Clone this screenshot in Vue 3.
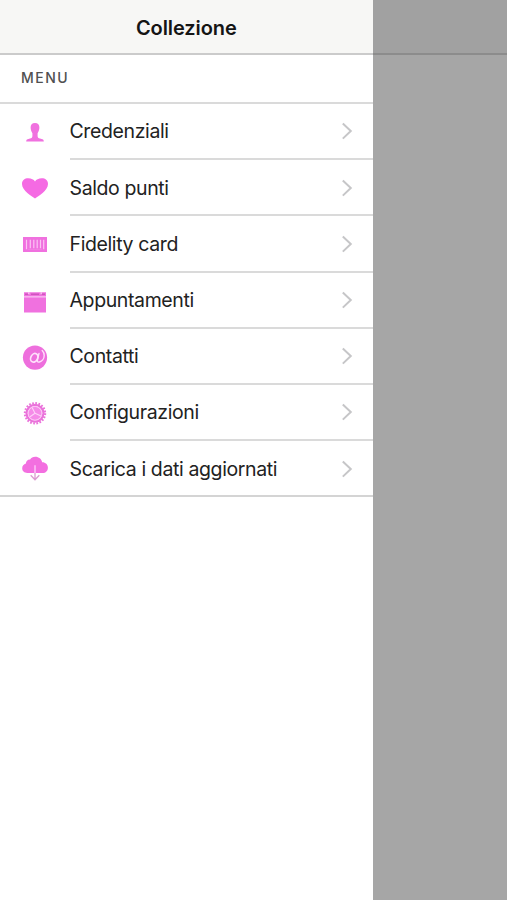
<script setup>
const items = [
  { icon: 'person', label: 'Credenziali' },
  { icon: 'heart', label: 'Saldo punti' },
  { icon: 'card', label: 'Fidelity card' },
  { icon: 'calendar', label: 'Appuntamenti' },
  { icon: 'at', label: 'Contatti' },
  { icon: 'gear', label: 'Configurazioni' },
  { icon: 'cloud', label: 'Scarica i dati aggiornati' },
]
</script>

<template>
  <div class="screen">
    <aside class="drawer">
      <header class="bar"><h1>Collezione</h1></header>
      <h2 class="section">MENU</h2>
      <ul class="menu">
        <li v-for="item in items" :key="item.icon" class="row">
          <svg class="icon" viewBox="0 0 30 30" width="30" height="30">
            <path v-if="item.icon === 'person'" fill="#f071df" d="M15 5C12 5 10.5 7 10.6 9.8C10.7 12 11.5 14 12.4 15.2V18C12.4 19.6 11.6 20.2 10 20.6L7.6 21.3C6.6 21.7 6.2 22.4 6.2 23.6H23.8C23.8 22.4 23.4 21.7 22.4 21.3L20 20.6C18.4 20.2 17.6 19.6 17.6 18V15.2C18.5 14 19.3 12 19.4 9.8C19.5 7 18 5 15 5Z" />
            <path v-else-if="item.icon === 'heart'" fill="#f56ae3" d="M15 24.6C12 22.3 2 16.8 2 10C2 6.2 4.7 4.3 8.3 4.3C11.4 4.3 13.8 5.6 15 7.4C16.2 5.6 18.6 4.3 21.7 4.3C25.3 4.3 28 6.2 28 10C28 16.8 18 22.3 15 24.6Z" />
            <g v-else-if="item.icon === 'card'">
              <rect x="3" y="7" width="24" height="15" fill="#f071df" />
              <path d="M6.5 9.7V19.3M10.3 9.7V18.3M13.8 9.7V18.3M17.2 9.7V18.3M20.5 9.7V18.3M23.7 9.7V19.3" stroke="#fbc4f4" stroke-width="1.2" />
              <path d="M8.5 19.4H21.5" stroke="#f9a6ee" stroke-width=".6" stroke-dasharray="1 1" />
            </g>
            <g v-else-if="item.icon === 'calendar'">
              <path fill="#f071df" d="M4 5.2H26V9H4ZM4 10.2H26V25.6H4Z" />
              <path fill="#f9b0ef" d="M4 9H26V10.2H4Z" />
              <path d="M5 7.3H8.5M11 7.3H19M21.5 7.3H25" stroke="#cf56bf" stroke-width="1.4" />
              <path d="M8.8 5.2V7.2M21.2 5.2V7.2" stroke="#fbd0f6" stroke-width="1.2" />
            </g>
            <g v-else-if="item.icon === 'at'">
              <circle cx="15" cy="14.6" r="12.1" fill="#ee6fdd" />
              <g fill="none" stroke="#ffe0fb" stroke-width="1.7" stroke-linecap="round">
                <ellipse cx="14.2" cy="14.8" rx="3.4" ry="4.5" transform="rotate(26 14.2 14.8)" />
                <path d="M19 10.4L17.4 17C17.1 18.7 18 19.4 19.4 19C21.8 18.3 24.2 15.7 24.2 12.6C24.2 10.5 23.4 8.7 22.2 7.5" stroke-width="1.4" />
              </g>
            </g>
            <g v-else-if="item.icon === 'gear'" fill="none" stroke="#ea72da">
              <circle cx="15" cy="14.3" r="10.1" stroke-width="2.2" stroke-dasharray="1.7 1.473" />
              <circle cx="15" cy="14.3" r="8.4" stroke-width="2.2" />
              <circle cx="15" cy="14.3" r="6.6" fill="#f58be8" stroke="none" />
              <circle cx="15" cy="14.3" r="6.9" stroke="#fbb9f3" stroke-width=".8" />
              <path d="M15 14.3L12.2 8.7M15 14.3L21 17M15 14.3L10 17.8" stroke="#fdd3f8" stroke-width="1.1" />
            </g>
            <g v-else>
              <path fill="#f36fe0" d="M7.3 18C4.3 18 2.2 16 2.2 13.3C2.2 11 3.7 9.2 5.9 8.6C5.9 6 7.8 4.2 10.1 4.4C11.2 2.7 12.9 1.7 15.2 1.7C18.9 1.7 21.5 4 22.1 7.2C25.4 7.1 27.9 9.4 27.9 12.7C27.9 15.8 25.7 18 22.7 18Z" />
              <path d="M15 10.2V18" stroke="#ffd8fa" stroke-width="1.2" />
              <path d="M15 18V25M10.7 20.3L15 24.8L19.3 20.3" fill="none" stroke="#dc9bd0" stroke-width="1.3" />
            </g>
          </svg>
          <div class="cell">
            <span class="label">{{ item.label }}</span>
            <svg class="chevron" viewBox="0 0 12 18" width="12" height="18">
              <path d="M1.8 1.4L9.8 9L1.8 16.6" fill="none" stroke="#c6c6c8" stroke-width="2" />
            </svg>
          </div>
        </li>
      </ul>
    </aside>
    <div class="backdrop"><div class="dimmed-bar"></div></div>
  </div>
</template>

<style>
body { margin: 0; background: #fff; }
</style>

<style scoped>
.screen {
  display: flex;
  height: 900px;
  overflow: hidden;
  font-family: Inter, "Liberation Sans", sans-serif;
}
.drawer { width: 372.6px; flex: none; background: #fff; }
.bar {
  box-sizing: border-box;
  height: 55px;
  display: flex;
  align-items: center;
  justify-content: center;
  background: #f7f7f5;
  border-bottom: 2px solid #cbcbcb;
}
h1 {
  margin: 2px 0 0;
  font-size: 20px;
  line-height: 26px;
  font-weight: 600;
  letter-spacing: -0.1px;
  color: #151515;
}
.section {
  box-sizing: border-box;
  height: 49px;
  margin: 0;
  padding: 13px 0 0 21px;
  border-bottom: 2px solid #dadada;
  font-size: 14px;
  line-height: 20px;
  font-weight: 500;
  letter-spacing: 1.5px;
  color: #505050;
}
.menu { margin: 0; padding: 0; list-style: none; }
.row { display: flex; height: 56.2px; }
.icon { flex: none; margin: 14px 19.5px 0 20px; }
.cell {
  box-sizing: border-box;
  flex: 1;
  display: flex;
  align-items: center;
  justify-content: space-between;
  padding: 0.6px 20px 0 0;
  border-bottom: 2px solid #dadada;
}
.row:last-child { box-sizing: border-box; border-bottom: 2px solid #d4d4d4; }
.row:last-child .cell { border-bottom: 0; }
.label {
  font-size: 19.5px;
  line-height: 26px;
  letter-spacing: -0.38px;
  color: #222;
  white-space: nowrap;
}
.chevron { flex: none; }
.backdrop { flex: 1; background: #a6a6a6; }
.dimmed-bar {
  box-sizing: border-box;
  height: 55px;
  background: #a1a1a1;
  border-bottom: 2px solid #8c8c8c;
}
</style>
